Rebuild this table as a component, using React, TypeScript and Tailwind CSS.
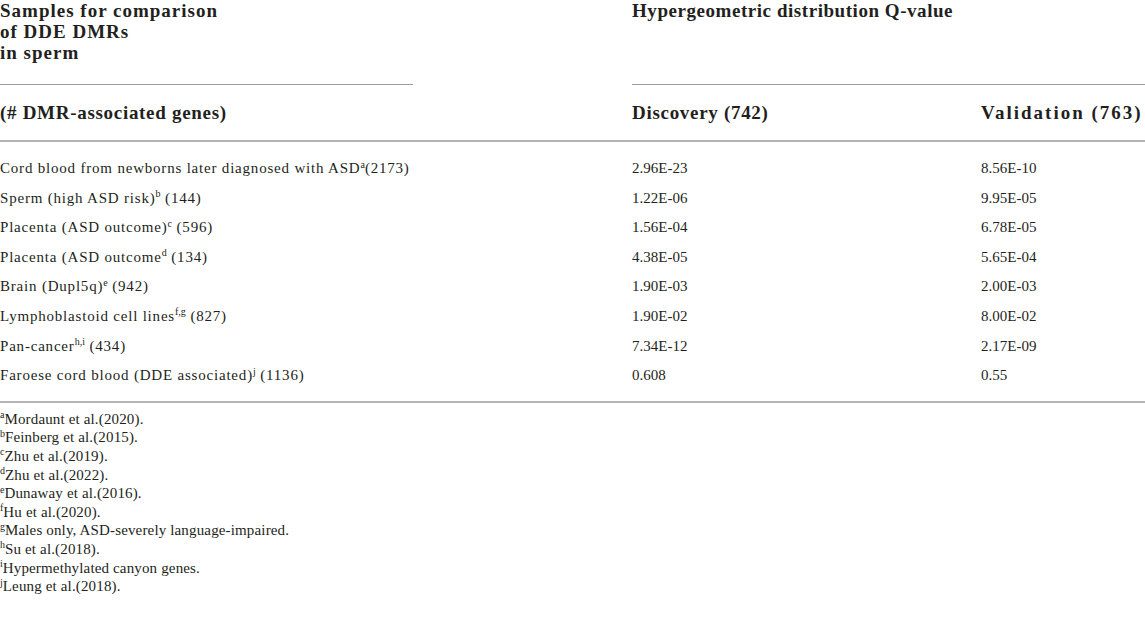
import React from 'react';

type Row = {
  label: React.ReactNode;
  discovery: string;
  validation: string;
};

const Sup = ({ children }: { children: React.ReactNode }) => (
  <sup className="text-[10px] top-[-0.55em] tracking-normal">{children}</sup>
);

const rows: Row[] = [
  { label: <>Cord blood from newborns later diagnosed with ASD<Sup>a</Sup>(2173)</>, discovery: '2.96E-23', validation: '8.56E-10' },
  { label: <>Sperm (high ASD risk)<Sup>b</Sup> (144)</>, discovery: '1.22E-06', validation: '9.95E-05' },
  { label: <>Placenta (ASD outcome)<Sup>c</Sup> (596)</>, discovery: '1.56E-04', validation: '6.78E-05' },
  { label: <>Placenta (ASD outcome<Sup>d</Sup> (134)</>, discovery: '4.38E-05', validation: '5.65E-04' },
  { label: <>Brain (Dupl5q)<Sup>e</Sup> (942)</>, discovery: '1.90E-03', validation: '2.00E-03' },
  { label: <>Lymphoblastoid cell lines<Sup>f,g</Sup> (827)</>, discovery: '1.90E-02', validation: '8.00E-02' },
  { label: <>Pan-cancer<Sup>h,i</Sup> (434)</>, discovery: '7.34E-12', validation: '2.17E-09' },
  { label: <>Faroese cord blood (DDE associated)<Sup>j</Sup> (1136)</>, discovery: '0.608', validation: '0.55' },
];

const footnotes: [string, string][] = [
  ['a', 'Mordaunt et al.(2020).'],
  ['b', 'Feinberg et al.(2015).'],
  ['c', 'Zhu et al.(2019).'],
  ['d', 'Zhu et al.(2022).'],
  ['e', 'Dunaway et al.(2016).'],
  ['f', 'Hu et al.(2020).'],
  ['g', 'Males only, ASD-severely language-impaired.'],
  ['h', 'Su et al.(2018).'],
  ['i', 'Hypermethylated canyon genes.'],
  ['j', 'Leung et al.(2018).'],
];

export default function App() {
  return (
    <div className="w-[1145px] h-[620px] bg-white text-[#231f20] font-['Liberation_Serif',serif] overflow-hidden">
      {/* header, first row */}
      <div className="flex h-[85px] font-bold text-[19px] leading-[21px] tracking-[0.7px]">
        <div className="w-[413px] border-b border-[#9c9c9c] tracking-[1px]">
          Samples for comparison<br />of DDE DMRs<br />in sperm
        </div>
        <div className="w-[219px]" />
        <div className="flex-1 border-b border-[#9c9c9c] tracking-[0.55px]">Hypergeometric distribution Q-value</div>
      </div>

      {/* header, second row */}
      <div className="flex items-center h-[57px] font-bold text-[19px] leading-[21px] tracking-[0.7px] border-b-2 border-[#b4b4b4]">
        <div className="w-[632px]">(# DMR-associated genes)</div>
        <div className="w-[349px]">Discovery (742)</div>
        <div className="flex-1 tracking-[2px]">Validation (763)</div>
      </div>

      {/* body */}
      <div className="pt-[12px] pb-[10px] border-b-2 border-[#b4b4b4] text-[15px]">
        {rows.map((r, i) => (
          <div key={i} className="flex leading-[29.6px]">
            <div className="w-[632px] tracking-[0.8px]">{r.label}</div>
            <div className="w-[349px]">{r.discovery}</div>
            <div className="flex-1">{r.validation}</div>
          </div>
        ))}
      </div>

      {/* footnotes */}
      <div className="pt-[7px] text-[15px] leading-[18.6px] tracking-[0.15px]">
        {footnotes.map(([k, t]) => (
          <div key={k}>
            <Sup>{k}</Sup>
            {t}
          </div>
        ))}
      </div>
    </div>
  );
}
